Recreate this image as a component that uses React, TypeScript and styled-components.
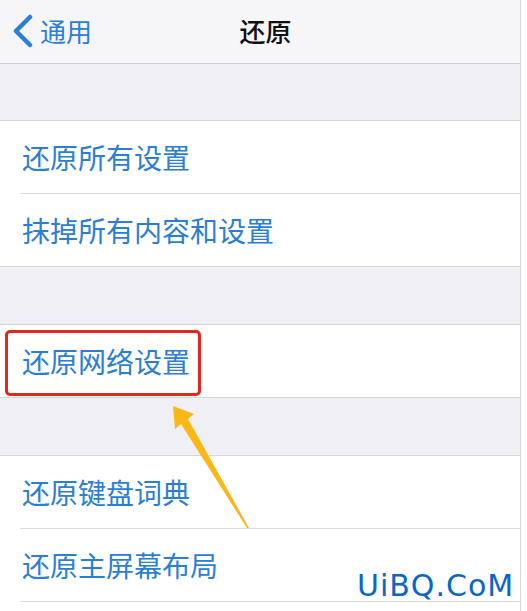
import React from "react";
import styled, { createGlobalStyle } from "styled-components";

const GlobalStyle = createGlobalStyle`
  html, body { margin: 0; padding: 0; background: #ffffff; }
  body { font-family: "Noto Sans CJK SC", "Noto Sans", sans-serif; }
  * { box-sizing: border-box; }
`;

const Screen = styled.div`
  position: relative;
  width: 521px;
  height: 611px;
  overflow: hidden;
  background: #ffffff;
  border-right: 1px solid #d9d9dc;
  display: flex;
  flex-direction: column;
`;

const NavBar = styled.header`
  height: 64px;
  flex: none;
  background: #f6f6f8;
  border-bottom: 1px solid #cfcfd3;
  display: grid;
  grid-template-columns: 1fr auto 1fr;
  align-items: center;
  padding: 0 0 2px 11px;
`;

const BackButton = styled.div`
  display: flex;
  align-items: center;
  gap: 5px;
  color: #2a7fd6;
  font-size: 26px;
  line-height: 1;
`;

const Title = styled.div`
  font-size: 26px;
  font-weight: 500;
  color: #111111;
  line-height: 1;
`;

const Gap = styled.div<{ $h: number }>`
  height: ${(p) => p.$h}px;
  flex: none;
  background: #efeff4;
  border-bottom: 1px solid #d6d6da;
`;

const Group = styled.section<{ $last?: boolean }>`
  background: #ffffff;
  flex: none;
  border-bottom: ${(p) => (p.$last ? "none" : "1px solid #d6d6da")};
`;

const Row = styled.div<{ $sep?: boolean }>`
  position: relative;
  height: ${(p) => (p.$sep ? 73 : 72)}px;
  display: flex;
  align-items: center;
  padding: 0 0 ${(p) => (p.$sep ? 1 : 0)}px 22px;
  font-size: 28px;
  line-height: 1;
  color: #2b7ed6;
  &::after {
    content: "";
    display: ${(p) => (p.$sep ? "block" : "none")};
    position: absolute;
    left: 20px;
    right: 0;
    bottom: 0;
    height: 1px;
    background: #dcdce0;
  }
`;

const Highlight = styled.div`
  position: absolute;
  left: 5px;
  top: 5px;
  width: 196px;
  height: 66px;
  border: 3px solid #e4271d;
  border-radius: 5px;
`;

const Overlay = styled.svg`
  position: absolute;
  left: 0;
  top: 0;
  width: 527px;
  height: 611px;
  pointer-events: none;
`;

const Watermark = styled.div`
  position: absolute;
  left: 357px;
  top: 571px;
  font-family: "DejaVu Sans", sans-serif;
  font-size: 30px;
  letter-spacing: 1px;
  color: #0a66c9;
  line-height: 1;
`;

export default function App() {
  return (
    <>
      <GlobalStyle />
      <Screen>
        <NavBar>
          <BackButton>
            <svg width="24" height="34" viewBox="0 0 24 34">
              <path d="M19 3 L5 17 L19 31" fill="none" stroke="#2a7fd6" strokeWidth="4.5" strokeLinecap="round" strokeLinejoin="round" />
            </svg>
            <span>通用</span>
          </BackButton>
          <Title>还原</Title>
          <div />
        </NavBar>
        <Gap $h={57} />
        <Group>
          <Row $sep>还原所有设置</Row>
          <Row>抹掉所有内容和设置</Row>
        </Group>
        <Gap $h={58} />
        <Group>
          <Row>
            还原网络设置
            <Highlight />
          </Row>
        </Group>
        <Gap $h={58} />
        <Group $last>
          <Row $sep>还原键盘词典</Row>
          <Row $sep>还原主屏幕布局</Row>
        </Group>
        <Overlay viewBox="0 0 527 611">
          <polygon points="173,406 194,414 188,419 249,528 247,528 181,424 175,429" fill="#fbb715" />
        </Overlay>
        <Watermark>UiBQ.CoM</Watermark>
      </Screen>
    </>
  );
}
